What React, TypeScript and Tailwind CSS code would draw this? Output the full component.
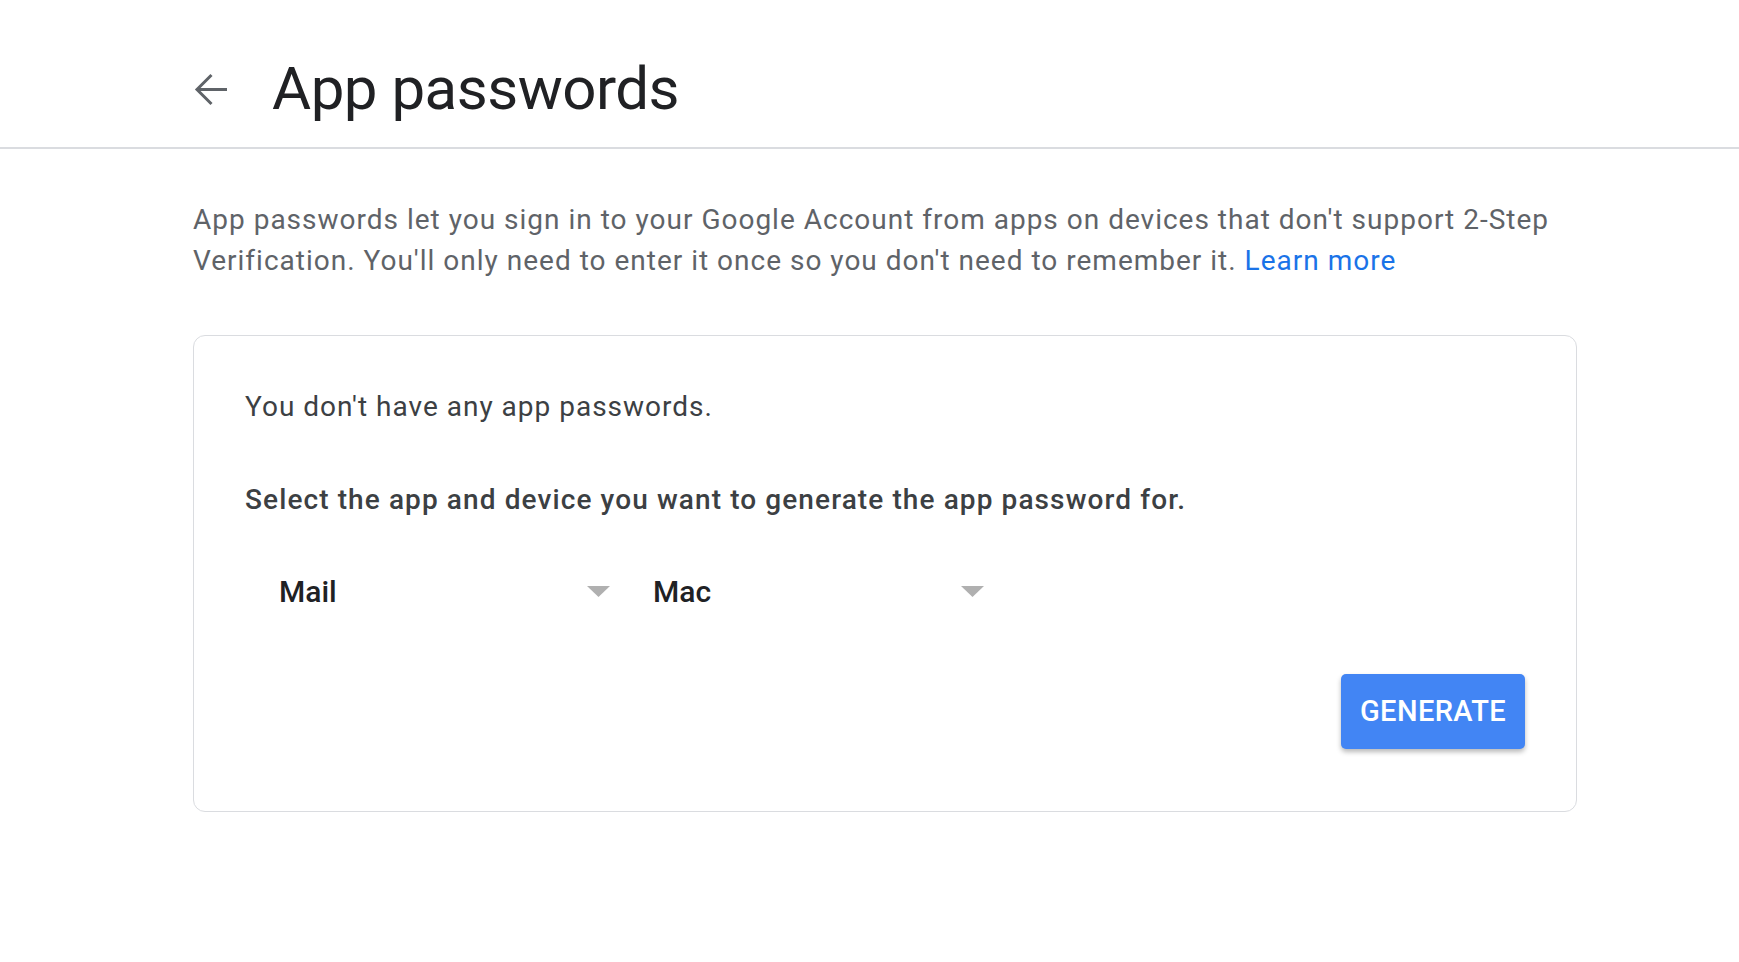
export default function App() {
  return (
    <div className="min-h-screen bg-white font-['Roboto',sans-serif]">
      <header className="border-b-2 border-[#dadce0] pl-[194px] pt-[53px] pb-[22px]">
        <div className="flex items-center h-[72px]">
          <button aria-label="Back" className="flex items-center justify-center w-[34px] h-[34px]">
            <svg width="34" height="33" viewBox="0 0 34 33" fill="none" stroke="#5f6368" strokeWidth="3">
              <path d="M33 16.5H3" />
              <path d="M17.5 2L3 16.5L17.5 31" />
            </svg>
          </button>
          <h1 className="ml-[44px] text-[60px] leading-[72px] font-normal text-[#202124] tracking-[-0.5px]">
            App passwords
          </h1>
        </div>
      </header>

      <main className="pl-[193px] w-[1577px]">
        <p className="mt-[50px] text-[28px] leading-[41px] text-[#5f6368] tracking-[1px]">
          App passwords let you sign in to your Google Account from apps on devices that don't support 2-Step
          Verification. You'll only need to enter it once so you don't need to remember it.{' '}
          <a href="#" className="text-[#1a73e8]">
            Learn more
          </a>
        </p>

        <section className="mt-[54px] border border-[#dadce0] rounded-[12px] px-[51px] pt-[50px] pb-[62px]">
          <div className="text-[28px] leading-[41px] text-[#3c4043] tracking-[1px]">
            You don't have any app passwords.
          </div>
          <div className="mt-[52px] text-[28px] leading-[41px] font-medium text-[#3c4043] tracking-[1.1px]">
            Select the app and device you want to generate the app password for.
          </div>

          <div className="mt-[51px] flex gap-[9px]">
            <Dropdown label="Mail" />
            <Dropdown label="Mac" />
          </div>

          <div className="mt-[62px] flex justify-end">
            <button className="w-[184px] h-[75px] rounded-[5px] bg-[#4285f4] text-white text-[29px] font-medium tracking-[0.4px] shadow-[0_3px_5px_rgba(0,0,0,0.28)]">
              GENERATE
            </button>
          </div>
        </section>
      </main>
    </div>
  );
}

function Dropdown({ label }: { label: string }) {
  return (
    <div className="w-[365px] pl-[34px] h-[41px] flex items-center justify-between">
      <span className="text-[30px] leading-[41px] font-medium text-[#202124]">{label}</span>
      <svg width="23" height="11" viewBox="0 0 23 11">
        <path d="M0 0H23L11.5 11Z" fill="#b0b0b0" />
      </svg>
    </div>
  );
}
